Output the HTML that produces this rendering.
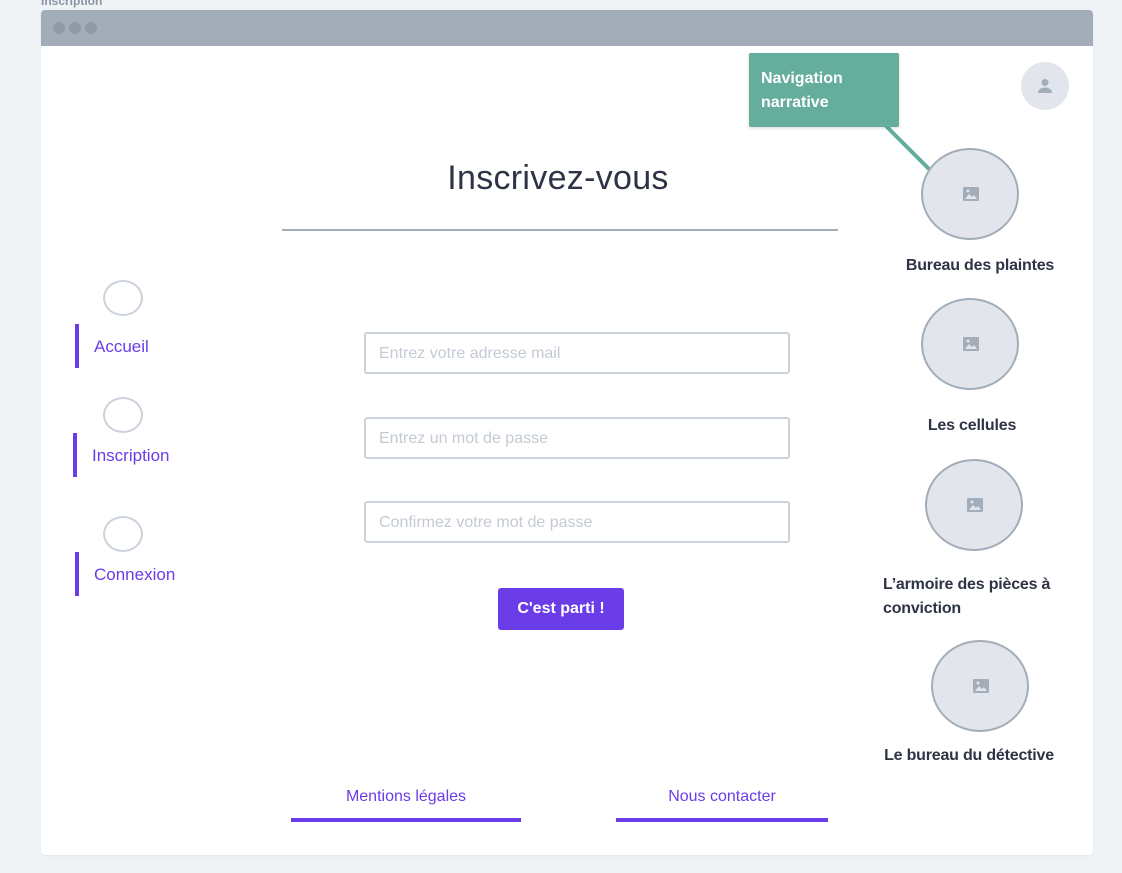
<!DOCTYPE html>
<html><head><meta charset="utf-8"><style>
*{margin:0;padding:0;box-sizing:border-box}
body{width:1122px;height:873px;background:#eff3f6;font-family:"Liberation Sans",sans-serif;position:relative;overflow:hidden}
.a{position:absolute}
.lbl{left:41px;top:-6px;font-size:12px;font-weight:bold;color:#8a94a3}
.win{left:41px;top:10px;width:1052px;height:845px;background:#fff;border-radius:4px;overflow:hidden;box-shadow:0 1px 2px rgba(0,0,0,.05)}
.bar{left:0;top:0;width:1052px;height:36px;background:#a3adb9}
.dot{width:12px;height:12px;border-radius:50%;background:#909aa8;top:12px}
.nav{color:#6a3de8;font-size:17px}
.vb{width:4px;height:44px;background:#6a3de8}
.lc{width:40px;height:36px;border:2px solid #cbd2dc;border-radius:50%}
.inp{left:364px;width:426px;height:42px;border:2px solid #cbd2dc;border-radius:3px;color:#c3cad4;font-size:16px;padding-left:13px;line-height:40px}
.rc{width:98px;height:92px;border:2px solid #a3adb9;border-radius:50%;background:#e2e6ec}
.rc svg{position:absolute;left:40px;top:37px}
.rt{font-size:16px;font-weight:bold;color:#2e3445;letter-spacing:-0.2px}
.ft{color:#6a3de8;font-size:16px;text-align:center}
.ul{height:4px;background:#6a3de8}
</style></head><body>
<div class="a lbl">Inscription</div>
<div class="a win">
<div class="a bar"></div>
<div class="a dot" style="left:12px"></div><div class="a dot" style="left:28px"></div><div class="a dot" style="left:44px"></div>
</div>
<div class="a" style="left:1021px;top:62px;width:48px;height:48px;border-radius:50%;background:#e2e6ec"></div>
<svg class="a" style="left:1036px;top:77px" width="18" height="18" viewBox="0 0 18 18"><circle cx="9" cy="5.5" r="3.5" fill="#a3adb9"/><path d="M2 16c0-4 4-5.5 7-5.5s7 1.5 7 5.5z" fill="#a3adb9"/></svg>
<svg class="a" style="left:0;top:0" width="1122" height="873"><line x1="886" y1="126" x2="930" y2="170" stroke="#65ad9d" stroke-width="4"/></svg>
<div class="a" style="left:749px;top:53px;width:150px;height:74px;background:#65ad9d;border-radius:2px;color:#fff;font-weight:bold;font-size:16px;line-height:24px;padding:14px 0 0 12px;box-shadow:0 1px 3px rgba(0,0,0,.15)">Navigation<br>narrative</div>
<div class="a" style="left:282px;top:159px;width:552px;text-align:center;font-size:34px;color:#2e3445;letter-spacing:0.3px">Inscrivez-vous</div>
<div class="a" style="left:282px;top:229px;width:556px;height:2px;background:#a3adb9"></div>
<div class="a lc" style="left:103px;top:280px"></div>
<div class="a vb" style="left:75px;top:324px"></div>
<div class="a nav" style="left:94px;top:337px">Accueil</div>
<div class="a lc" style="left:103px;top:397px"></div>
<div class="a vb" style="left:73px;top:433px"></div>
<div class="a nav" style="left:92px;top:446px">Inscription</div>
<div class="a lc" style="left:103px;top:516px"></div>
<div class="a vb" style="left:75px;top:552px"></div>
<div class="a nav" style="left:94px;top:565px">Connexion</div>
<div class="a inp" style="top:332px">Entrez votre adresse mail</div>
<div class="a inp" style="top:417px">Entrez un mot de passe</div>
<div class="a inp" style="top:501px">Confirmez votre mot de passe</div>
<div class="a" style="left:498px;top:588px;width:126px;height:42px;background:#6a3de8;border-radius:3px;color:#fff;font-weight:bold;font-size:16px;text-align:center;line-height:42px">C'est parti !</div>
<div class="a rc" style="left:921px;top:148px"><svg width="16" height="14" viewBox="0 0 16 14"><rect width="16" height="14" rx="1" fill="#a3adb9"/><path d="M2 12l4-5 3 3 2-2 3 4z" fill="#e2e6ec"/><circle cx="5" cy="4" r="1.5" fill="#e2e6ec"/></svg></div>
<div class="a rt" style="left:880px;top:257px;width:200px;text-align:center">Bureau des plaintes</div>
<div class="a rc" style="left:921px;top:298px"><svg width="16" height="14" viewBox="0 0 16 14"><rect width="16" height="14" rx="1" fill="#a3adb9"/><path d="M2 12l4-5 3 3 2-2 3 4z" fill="#e2e6ec"/><circle cx="5" cy="4" r="1.5" fill="#e2e6ec"/></svg></div>
<div class="a rt" style="left:872px;top:417px;width:200px;text-align:center">Les cellules</div>
<div class="a rc" style="left:925px;top:459px"><svg width="16" height="14" viewBox="0 0 16 14"><rect width="16" height="14" rx="1" fill="#a3adb9"/><path d="M2 12l4-5 3 3 2-2 3 4z" fill="#e2e6ec"/><circle cx="5" cy="4" r="1.5" fill="#e2e6ec"/></svg></div>
<div class="a rt" style="left:883px;top:573px;width:190px;line-height:24px">L’armoire des pièces à conviction</div>
<div class="a rc" style="left:931px;top:640px"><svg width="16" height="14" viewBox="0 0 16 14"><rect width="16" height="14" rx="1" fill="#a3adb9"/><path d="M2 12l4-5 3 3 2-2 3 4z" fill="#e2e6ec"/><circle cx="5" cy="4" r="1.5" fill="#e2e6ec"/></svg></div>
<div class="a rt" style="left:869px;top:747px;width:200px;text-align:center">Le bureau du détective</div>
<div class="a ft" style="left:291px;top:788px;width:230px">Mentions légales</div>
<div class="a ul" style="left:291px;top:818px;width:230px"></div>
<div class="a ft" style="left:616px;top:788px;width:212px">Nous contacter</div>
<div class="a ul" style="left:616px;top:818px;width:212px"></div>
</body></html>
